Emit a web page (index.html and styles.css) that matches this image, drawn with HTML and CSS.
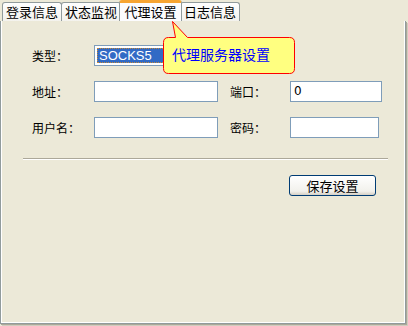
FILE: index.html
```html
<!DOCTYPE html>
<html lang="zh-CN">
<head>
    <meta charset="UTF-8">
    <title>代理设置</title>
    <link rel="stylesheet" href="styles.css">
</head>
<body>
    <div class="tabs">
        <div class="tab">登录信息</div>
        <div class="tab">状态监视</div>
        <div class="tab active">代理设置</div>
        <div class="tab">日志信息</div>
    </div>
    <div class="panel">
        <div class="form">
            <label>类型：</label>
            <div class="combo">
                <div class="combo-value">SOCKS5</div>
                <div class="combo-btn"></div>
            </div>
            <div></div><div></div><div></div>

            <label>地址：</label>
            <div class="field wide"></div>
            <div></div>
            <label>端口：</label>
            <div class="field port">0</div>

            <label>用户名：</label>
            <div class="field wide"></div>
            <div></div>
            <label>密码：</label>
            <div class="field pwd"></div>
        </div>
        <hr class="sep">
        <div class="actions">
            <button class="btn">保存设置</button>
        </div>
    </div>

    <!-- 气泡提示 -->
    <div class="balloon">
        <svg width="136" height="56" viewBox="0 0 136 56">
            <path d="M9.5 0.5 L24.5 16.5 L126.5 16.5 Q131.5 16.5 131.5 21.5 L131.5 47.5 Q131.5 52.5 126.5 52.5 L5.5 52.5 Q0.5 52.5 0.5 47.5 L0.5 21.5 Q0.5 16.5 5.5 16.5 L12.5 16.5 Z" fill="#ffff80" stroke="#ff0000" stroke-width="1"/>
        </svg>
        <div class="balloon-text">代理服务器设置</div>
    </div>
</body>
</html>
```

FILE: styles.css
```css
body {
    margin: 0;
    width: 408px;
    height: 326px;
    background-color: #ece9d8;
    font-family: "Noto Sans CJK SC", "DejaVu Sans", sans-serif;
    font-size: 12px;
    color: #000;
    position: relative;
    overflow: hidden;
}
.tabs {
    display: flex;
    align-items: flex-end;
    height: 21px;
    padding-left: 2px;
}
.tab {
    box-sizing: border-box;
    height: 19px;
    width: 60px;
    margin-right: -1px;
    border: 1px solid #919b9c;
    border-bottom: none;
    border-radius: 3px 3px 0 0;
    background: linear-gradient(#fefefe, #f3f2ed);
    text-align: center;
    line-height: 17px;
    font-size: 13px;
}
.tab.active {
    height: 21px;
    width: 63px;
    margin-left: -1px;
    margin-right: -2px;
    background: #fcfcfe;
    border-top: 3px solid #f7a532;
    line-height: 17px;
    position: relative;
    z-index: 1;
}
.panel {
    box-sizing: border-box;
    width: 406px;
    height: 303px;
    border: 1px solid #919b9c;
    border-top: none;
    box-shadow: inset 1px 0 0 #fff, inset -1px -1px 0 #fff, 1px 1px 0 #aca899, 2px 2px 0 #d0cdbf;
    padding: 24px 0 0 31px;
}
.form {
    display: grid;
    grid-template-columns: 62px 124px 12px 60px auto;
    grid-auto-rows: 21px;
    row-gap: 15px;
    align-items: center;
}
.field {
    box-sizing: border-box;
    height: 21px;
    border: 1px solid #7f9db9;
    background: #fff;
    padding-left: 3px;
    line-height: 19px;
    font-family: "DejaVu Sans", sans-serif;
    font-size: 12px;
}
.field.wide {
    width: 124px;
}
.field.port {
    width: 92px;
}
.field.pwd {
    width: 89px;
}
.combo {
    box-sizing: border-box;
    display: flex;
    height: 21px;
    width: 124px;
    border: 1px solid #7f9db9;
    background: #fff;
    padding: 2px;
}
.combo-value {
    flex: 1;
    background: #316ac5;
    outline: 1px dotted #c58a3a;
    outline-offset: -1px;
    color: #fff;
    padding-left: 2px;
    line-height: 15px;
    font-family: "Liberation Sans", sans-serif;
    font-size: 13px;
}
.combo-btn {
    width: 16px;
}
.sep {
    margin: 20px 0 0 -9px;
    width: 365px;
    height: 0;
    border: none;
    border-top: 1px solid #aca899;
    border-bottom: 1px solid #fff;
}
.actions {
    display: flex;
    justify-content: flex-end;
    padding-right: 29px;
    margin-top: 15px;
}
.btn {
    box-sizing: border-box;
    width: 87px;
    height: 21px;
    border: 1px solid #003c74;
    border-radius: 3px;
    background: linear-gradient(#ffffff, #f2f1ec 80%, #d6d0c5);
    font-family: "Noto Sans CJK SC", sans-serif;
    font-size: 13px;
    line-height: 17px;
    padding: 0;
    color: #000;
}
.balloon {
    position: absolute;
    left: 163px;
    top: 21px;
    width: 136px;
    height: 56px;
}
.balloon svg {
    display: block;
}
.balloon-text {
    position: absolute;
    left: 9px;
    top: 25px;
    color: #0000ff;
    font-size: 14px;
    line-height: 16px;
    white-space: nowrap;
}
```
